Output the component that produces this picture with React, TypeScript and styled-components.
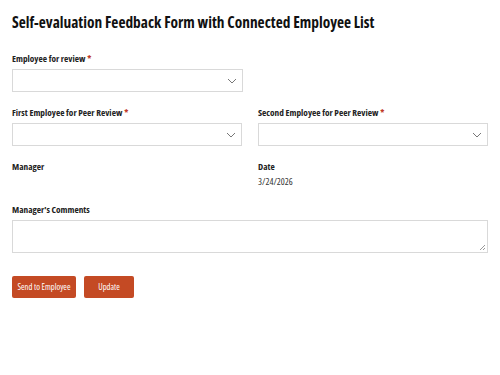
import React from "react";
import styled, { createGlobalStyle } from "styled-components";

const Global = createGlobalStyle`
  html, body { margin: 0; padding: 0; background: #fff; }
  body {
    font-family: "Open Sans", "Liberation Sans Narrow", "DejaVu Sans", sans-serif;
    font-stretch: 75%;
    color: #1a1a1a;
  }
  * { box-sizing: border-box; }
`;

const Page = styled.div`
  padding: 13px 12px 0 12px;
  width: 500px;
  display: flex;
  flex-direction: column;
`;

const Title = styled.h1`
  margin: 0 0 20px 0;
  font-size: 15.4px;
  line-height: 20px;
  font-weight: 700;
  color: #111;
`;

const Row = styled.div<{ $layout: "single" | "half" | "full"; $mb?: number }>`
  display: grid;
  grid-template-columns: ${(p) =>
    p.$layout === "half" ? "1fr 1fr" : p.$layout === "single" ? "231px" : "1fr"};
  column-gap: 16px;
  margin-bottom: ${(p) => p.$mb ?? 15}px;
`;

const Field = styled.div`
  display: flex;
  flex-direction: column;
`;

const Label = styled.label`
  font-size: 9.3px;
  font-weight: 700;
  line-height: 12px;
  margin-bottom: 2px;
  color: #222;
`;

const Req = styled.span`
  color: #c0392b;
  margin-left: 2px;
`;

const SelectBox = styled.div`
  margin-top: 2px;
  height: 23px;
  border: 1px solid #d9d9d9;
  background: #fff;
  display: flex;
  align-items: center;
  justify-content: flex-end;
  padding-right: 5px;
`;

const Value = styled.div`
  font-size: 9.4px;
  line-height: 14px;
  color: #333;
`;

const TextArea = styled.div`
  margin-top: 2px;
  position: relative;
  height: 33px;
  border: 1px solid #d9d9d9;
  background: #fff;
`;

const Grip = styled.svg`
  position: absolute;
  right: 1px;
  bottom: 1px;
`;

const Buttons = styled.div`
  display: flex;
  gap: 8px;
  margin-top: 8px;
`;

const Button = styled.button<{ $w: number }>`
  width: ${(p) => p.$w}px;
  height: 22px;
  border: none;
  border-radius: 2px;
  background: #c44a24;
  color: #fff;
  font-family: inherit;
  font-stretch: 75%;
  font-size: 8.6px;
  padding: 0;
`;

const Chevron = () => (
  <svg width="10" height="6" viewBox="0 0 10 6">
    <path d="M1 1 L5 5 L9 1" fill="none" stroke="#777" strokeWidth="1" />
  </svg>
);

const Select = () => (
  <SelectBox>
    <Chevron />
  </SelectBox>
);

export default function App() {
  return (
    <>
      <Global />
      <Page>
        <Title>Self-evaluation Feedback Form with Connected Employee List</Title>
        <Row $layout="single">
          <Field>
            <Label>
              Employee for review<Req>*</Req>
            </Label>
            <Select />
          </Field>
        </Row>
        <Row $layout="half">
          <Field>
            <Label>
              First Employee for Peer Review<Req>*</Req>
            </Label>
            <Select />
          </Field>
          <Field>
            <Label>
              Second Employee for Peer Review<Req>*</Req>
            </Label>
            <Select />
          </Field>
        </Row>
        <Row $layout="half">
          <Field>
            <Label>Manager</Label>
          </Field>
          <Field>
            <Label>Date</Label>
            <Value>3/24/2026</Value>
          </Field>
        </Row>
        <Row $layout="full" $mb={15}>
          <Field>
            <Label>Manager's Comments</Label>
            <TextArea>
              <Grip width="7" height="7" viewBox="0 0 7 7">
                <path d="M6 1 L1 6 M6 4 L4 6" stroke="#999" strokeWidth="1" />
              </Grip>
            </TextArea>
          </Field>
        </Row>
        <Buttons>
          <Button $w={64}>Send to Employee</Button>
          <Button $w={50}>Update</Button>
        </Buttons>
      </Page>
    </>
  );
}
